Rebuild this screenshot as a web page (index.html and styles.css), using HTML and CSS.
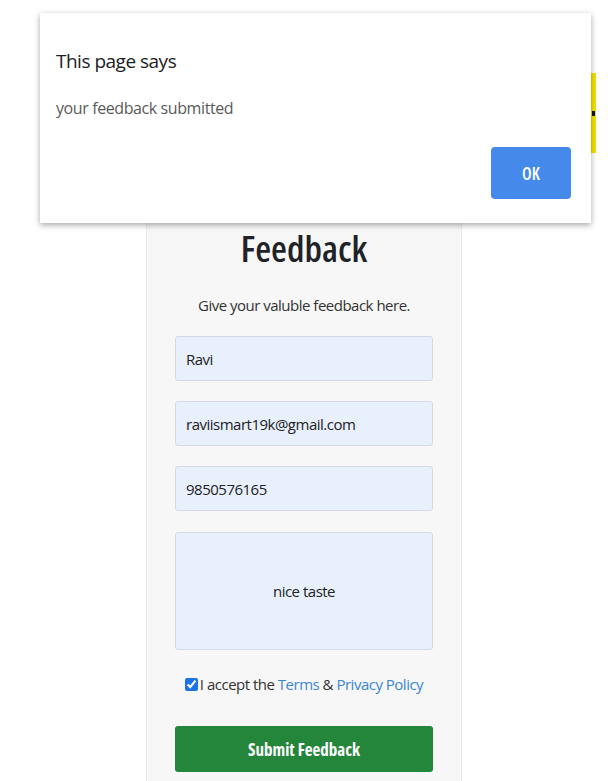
FILE: index.html
```html
<!DOCTYPE html>
<html lang="en">
<head>
<meta charset="utf-8">
<title>Feedback</title>
<link rel="stylesheet" href="styles.css">
</head>
<body>
<div class="page">
  <div class="card">
    <h1 class="title">Feedback</h1>
    <p class="subtitle">Give your valuble feedback here.</p>
    <form class="form">
      <input class="field" type="text" value="Ravi">
      <input class="field" type="email" value="raviismart19k@gmail.com">
      <input class="field" type="tel" value="9850576165">
      <textarea class="field area">nice taste</textarea>
      <label class="accept"><input class="check" type="checkbox" checked>I accept the <a class="link" href="#">Terms</a> &amp; <a class="link" href="#">Privacy Policy</a></label>
      <button class="submit" type="button">Submit Feedback</button>
    </form>
  </div>
</div>
<div class="badge"><span class="badge-mark"></span></div>
<div class="dialog">
  <div class="dialog-title">This page says</div>
  <div class="dialog-msg">your feedback submitted</div>
  <div class="dialog-actions"><button class="ok" type="button">OK</button></div>
</div>
</body>
</html>
```
FILE: styles.css
```css
* { box-sizing: border-box; }
html, body { margin: 0; padding: 0; background: #ffffff; }
body {
  font-family: "Open Sans", "Noto Sans", sans-serif;
  color: #222;
  width: 608px;
  height: 781px;
  overflow: hidden;
  position: relative;
}
.page {
  display: flex;
  justify-content: center;
  padding-top: 190px;
}
.card {
  width: 316px;
  height: 600px;
  background: #f7f7f7;
  border-left: 1px solid #ececec;
  border-right: 1px solid #ececec;
  padding: 38px 28px 0;
  display: flex;
  flex-direction: column;
  align-items: stretch;
}
.title {
  margin: 0;
  font-size: 36.5px;
  line-height: 40px;
  font-weight: 600;
  font-stretch: 75%;
  text-align: center;
  color: #1f2226;
}
.subtitle {
  margin: 27px 0 0;
  font-size: 15px;
  letter-spacing: -0.5px;
  line-height: 20px;
  text-align: center;
  color: #333;
}
.form {
  margin-top: 21px;
  display: flex;
  flex-direction: column;
}
.field {
  display: block;
  width: 258px;
  height: 45px;
  margin: 0 0 20px;
  padding: 0 10px;
  background: #e8f0fe;
  border: 1px solid #d3dae4;
  border-radius: 3px;
  font-family: inherit;
  font-size: 15px;
  letter-spacing: -0.5px;
  color: #222;
  outline: none;
}
.area {
  height: 118px;
  margin-top: 1px;
  margin-bottom: 18px;
  padding-top: 47px;
  text-align: center;
  resize: none;
  overflow: hidden;
  line-height: 22px;
}
.accept {
  display: block;
  height: 32px;
  line-height: 32px;
  text-align: center;
  font-size: 15px;
  letter-spacing: -0.5px;
  color: #333;
  white-space: nowrap;
}
.check {
  margin: 0 2px 0 0;
  width: 13px;
  height: 13px;
  vertical-align: -1px;
  accent-color: #1a73e8;
}
.link {
  color: #3a86d6;
  text-decoration: none;
}
.submit {
  margin-top: 26px;
  width: 258px;
  height: 46px;
  background: #23863a;
  border: none;
  border-radius: 3px;
  color: #fff;
  font-family: inherit;
  font-stretch: 75%;
  font-weight: 700;
  font-size: 17px;
}
.badge {
  position: absolute;
  left: 520px;
  top: 73px;
  width: 76px;
  height: 80px;
  background: #f4e300;
  display: flex;
  align-items: center;
  justify-content: flex-end;
}
.badge-mark {
  display: block;
  width: 3px;
  height: 5px;
  margin-right: 1px;
  background: #111;
}
.dialog {
  position: absolute;
  left: 40px;
  top: 13px;
  width: 551px;
  height: 210px;
  background: #fff;
  box-shadow: 0 2px 6px rgba(0, 0, 0, 0.35);
  padding: 36px 20px 24px 16px;
  display: flex;
  flex-direction: column;
}
.dialog-title {
  font-size: 19px;
  letter-spacing: -0.5px;
  line-height: 24px;
  color: #202124;
}
.dialog-msg {
  margin-top: 25px;
  font-size: 16px;
  letter-spacing: -0.4px;
  line-height: 20px;
  color: #5a5a5a;
}
.dialog-actions {
  margin-top: auto;
  display: flex;
  justify-content: flex-end;
}
.ok {
  width: 80px;
  height: 52px;
  background: #4589ea;
  border: none;
  border-radius: 4px;
  color: #fff;
  font-family: inherit;
  font-stretch: 75%;
  font-size: 17px;
  font-weight: 600;
}
```
